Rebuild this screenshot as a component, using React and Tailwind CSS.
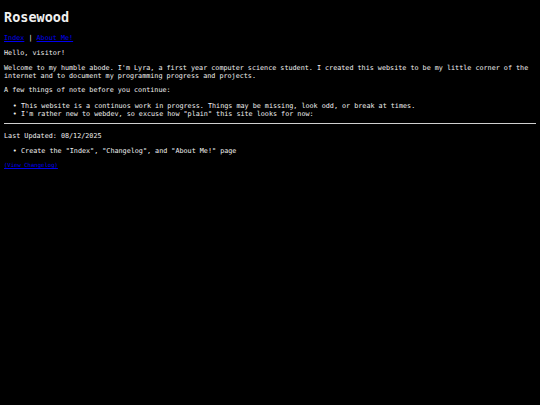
export default function App() {
  return (
    <div
      className="min-h-[405px] bg-black p-[4px] text-[6.75px] leading-[1.164] text-[#f0f0f0]"
      style={{ fontFamily: '"DejaVu Sans Mono", monospace' }}
    >
      <h1 className="mt-[6px] mb-[9px] text-[13.5px] font-bold leading-[1.164]">Rosewood</h1>

      <p className="mt-[6.75px] mb-[7.75px]">
        <a href="#" className="text-[#0000ee] underline">Index</a> |{" "}
        <a href="#" className="text-[#0000ee] underline">About Me!</a>
      </p>

      <p className="my-[6.75px]">Hello, visitor!</p>

      <p className="my-[6.75px]">
        Welcome to my humble abode. I'm Lyra, a first year computer science student. I created this website to be my little corner of the internet and to document my programming progress and projects.
      </p>

      <p className="my-[6.75px]">A few things of note before you continue:</p>

      <ul className="mt-[7.75px] mb-[4.75px] list-['•_'] pl-[17px]">
        <li>This website is a continuos work in progress. Things may be missing, look odd, or break at times.</li>
        <li>I'm rather new to webdev, so excuse how "plain" this site looks for now:</li>
      </ul>

      <hr className="mt-[4px] mb-[8.75px] border-t border-[#cfcfcf]" />

      <p className="my-[6.75px]">Last Updated: 08/12/2025</p>

      <ul className="my-[6.75px] list-['•_'] pl-[17px]">
        <li>Create the "Index", "Changelog", and "About Me!" page</li>
      </ul>

      <p className="my-[6.75px] text-[5.6px]">
        <a href="#" className="text-[#0000ee] underline">(View Changelog)</a>
      </p>
    </div>
  );
}
